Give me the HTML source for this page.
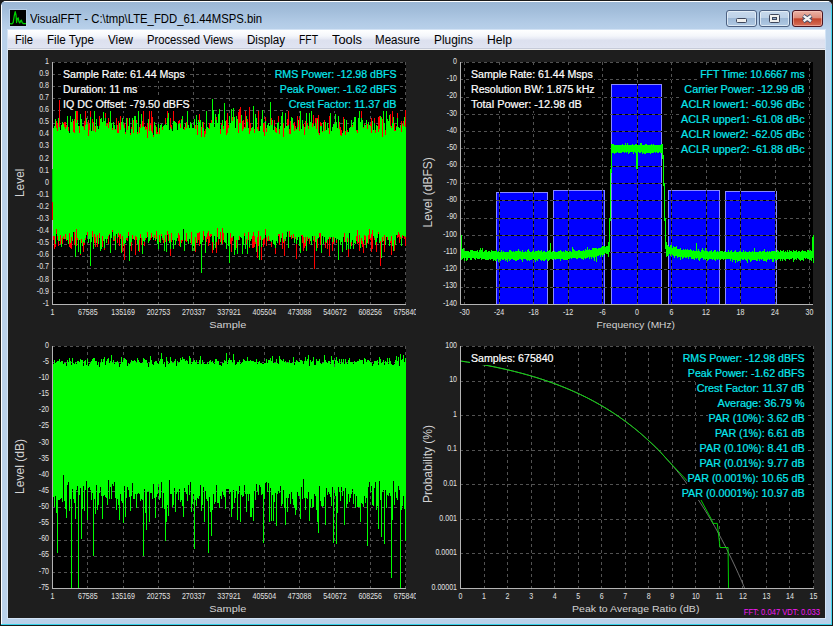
<!DOCTYPE html>
<html>
<head>
<meta charset="utf-8">
<title>VisualFFT</title>
<style>
html,body{margin:0;padding:0;}
body{width:833px;height:626px;overflow:hidden;background:#000;position:relative;font-family:"Liberation Sans",sans-serif;}
.abs{position:absolute;}
#frame{left:0;top:0;width:833px;height:626px;background:#1a1a1a;}
#win{left:1px;top:1px;width:831px;height:624px;background:#b9d1ea;border-radius:5px 5px 0 0;overflow:hidden;}
#cap{left:0;top:0;width:831px;height:29px;background:linear-gradient(#9ab6d4 0%,#a3bedb 35%,#b2cbe6 75%,#b9d1ea 100%);}
#hl-top{left:3px;top:0;width:825px;height:1px;background:#fff;}
#hl-left{left:0;top:4px;width:1px;height:620px;background:#fff;}
#hl-right{left:830px;top:4px;width:1px;height:620px;background:#43d9f0;}
#hl-bot{left:0;top:623px;width:831px;height:1px;background:#35d2ea;}
#client-edge{left:6px;top:28px;width:818px;height:590px;background:#d3e3f5;}
#menu{left:8px;top:30px;width:817px;height:20px;background:linear-gradient(#ffffff 0%,#f4f6fb 30%,#e6e9f4 45%,#dde1ef 50%,#dfe3f1 85%,#e3e7f3 90%,#c6cbd9 90%,#c6cbd9 95%,#f0f0f0 95%);}
#content{left:8px;top:50px;width:817px;height:568px;background:#1e1e1e;}
.mi{position:absolute;top:33px;font-size:12px;line-height:14px;color:#000;white-space:pre;transform-origin:0 0;}
#title{position:absolute;left:30px;top:12px;font-size:12px;line-height:14px;color:#000;white-space:pre;transform-origin:0 0;transform:scaleX(0.943);}
.btn{position:absolute;top:10px;width:29px;height:15px;border:1px solid #4c6182;border-radius:3px;background:linear-gradient(#c7d9ec 0%,#bed2e8 45%,#9db8d6 47%,#b0c9e3 100%);box-shadow:inset 0 0 0 1px rgba(240,246,252,.7);}
#bclose{border-color:#4a1420;background:linear-gradient(#eab3a6 0%,#dd8d7b 46%,#c2442a 52%,#d5705a 100%);box-shadow:inset 0 0 0 1px rgba(255,210,200,.5);}
</style>
</head>
<body>
<div id="frame" class="abs"></div>
<div id="win" class="abs">
  <div id="cap" class="abs"></div>
  <div id="hl-top" class="abs"></div>
  <div id="hl-left" class="abs"></div>
  <div id="hl-right" class="abs"></div>
  <div id="hl-bot" class="abs"></div>
</div>
<div id="client-edge" class="abs" style="left:7px;top:29px;width:819px;height:590px"></div>
<div id="menu" class="abs"></div>
<div id="content" class="abs"></div>
<!-- icon -->
<svg class="abs" style="left:9px;top:9px" width="18" height="18" viewBox="0 0 18 18">
  <rect x="0" y="0" width="18" height="18" fill="#c4d9ef" opacity=".6"/>
  <rect x="1" y="1" width="16" height="16" fill="#000"/>
  <path d="M1 14.6 L3 14.8 L4.2 13.5 L5.2 7 L6.2 2.6 L7 6 L7.6 13.5 L8.2 10 L9.2 8.8 L10 12.8 L10.8 14 L11.6 12 L12.4 11.2 L13.2 13.8 L14.5 14.6 L17 14.6" fill="none" stroke="#00d000" stroke-width="1.25" stroke-linejoin="round"/>
</svg>
<div id="title">VisualFFT - C:\tmp\LTE_FDD_61.44MSPS.bin</div>
<!-- caption buttons -->
<div class="btn" style="left:726px"><svg width="29" height="15" style="position:absolute;left:0;top:0"><rect x="9.5" y="7.5" width="10" height="4" rx="1" fill="#f0f0ee" stroke="#3e475c" stroke-width="1"/></svg></div>
<div class="btn" style="left:759px"><svg width="29" height="15" style="position:absolute;left:0;top:0"><rect x="9.5" y="3.5" width="10" height="8" rx="1" fill="#f0f0ee" stroke="#3e475c" stroke-width="1"/><rect x="12.5" y="6.5" width="4" height="2" fill="#8fa9c8" stroke="#3e475c" stroke-width="1"/></svg></div>
<div class="btn" id="bclose" style="left:792px"><svg width="29" height="15" style="position:absolute;left:0;top:0"><path d="M10.3 4.7 L18.3 10.5 M18.3 4.7 L10.3 10.5" stroke="#46506a" stroke-width="4.2" stroke-linecap="butt"/><path d="M10.6 4.9 L18 10.3 M18 4.9 L10.6 10.3" stroke="#f4f4f4" stroke-width="2.3" stroke-linecap="butt"/></svg></div>
<!-- menu items -->
<div class="mi" style="left:15px;transform:scaleX(0.931)">File</div>
<div class="mi" style="left:47px;transform:scaleX(0.970)">File Type</div>
<div class="mi" style="left:108px;transform:scaleX(0.969)">View</div>
<div class="mi" style="left:147px;transform:scaleX(0.937)">Processed Views</div>
<div class="mi" style="left:247px;transform:scaleX(0.965)">Display</div>
<div class="mi" style="left:299px;transform:scaleX(0.864)">FFT</div>
<div class="mi" style="left:332px;transform:scaleX(1.071)">Tools</div>
<div class="mi" style="left:375px;transform:scaleX(0.964)">Measure</div>
<div class="mi" style="left:434px;transform:scaleX(0.991)">Plugins</div>
<div class="mi" style="left:487px;transform:scaleX(1.013)">Help</div>

<svg width="833" height="626" viewBox="0 0 833 626" style="position:absolute;left:0;top:0" font-family='"Liberation Sans", sans-serif' shape-rendering="crispEdges">
<rect x="52" y="62" width="354" height="242" fill="#000"/>
<path d="M53 62.5H406" stroke="#000" stroke-width="1"/>
<path d="M53 62.5H406" stroke="#525252" stroke-width="1" stroke-dasharray="3 3" stroke-dashoffset="1"/>
<path d="M53 74.5H406" stroke="#000" stroke-width="1"/>
<path d="M53 74.5H406" stroke="#525252" stroke-width="1" stroke-dasharray="3 3" stroke-dashoffset="1"/>
<path d="M53 86.5H406" stroke="#000" stroke-width="1"/>
<path d="M53 86.5H406" stroke="#525252" stroke-width="1" stroke-dasharray="3 3" stroke-dashoffset="1"/>
<path d="M53 98.5H406" stroke="#000" stroke-width="1"/>
<path d="M53 98.5H406" stroke="#525252" stroke-width="1" stroke-dasharray="3 3" stroke-dashoffset="1"/>
<path d="M53 110.5H406" stroke="#000" stroke-width="1"/>
<path d="M53 110.5H406" stroke="#525252" stroke-width="1" stroke-dasharray="3 3" stroke-dashoffset="1"/>
<path d="M53 123.5H406" stroke="#000" stroke-width="1"/>
<path d="M53 123.5H406" stroke="#525252" stroke-width="1" stroke-dasharray="3 3" stroke-dashoffset="1"/>
<path d="M53 135.5H406" stroke="#000" stroke-width="1"/>
<path d="M53 135.5H406" stroke="#525252" stroke-width="1" stroke-dasharray="3 3" stroke-dashoffset="1"/>
<path d="M53 147.5H406" stroke="#000" stroke-width="1"/>
<path d="M53 147.5H406" stroke="#525252" stroke-width="1" stroke-dasharray="3 3" stroke-dashoffset="1"/>
<path d="M53 159.5H406" stroke="#000" stroke-width="1"/>
<path d="M53 159.5H406" stroke="#525252" stroke-width="1" stroke-dasharray="3 3" stroke-dashoffset="1"/>
<path d="M53 171.5H406" stroke="#000" stroke-width="1"/>
<path d="M53 171.5H406" stroke="#525252" stroke-width="1" stroke-dasharray="3 3" stroke-dashoffset="1"/>
<path d="M53 183.5H406" stroke="#000" stroke-width="1"/>
<path d="M53 183.5H406" stroke="#525252" stroke-width="1" stroke-dasharray="3 3" stroke-dashoffset="1"/>
<path d="M53 195.5H406" stroke="#000" stroke-width="1"/>
<path d="M53 195.5H406" stroke="#525252" stroke-width="1" stroke-dasharray="3 3" stroke-dashoffset="1"/>
<path d="M53 207.5H406" stroke="#000" stroke-width="1"/>
<path d="M53 207.5H406" stroke="#525252" stroke-width="1" stroke-dasharray="3 3" stroke-dashoffset="1"/>
<path d="M53 219.5H406" stroke="#000" stroke-width="1"/>
<path d="M53 219.5H406" stroke="#525252" stroke-width="1" stroke-dasharray="3 3" stroke-dashoffset="1"/>
<path d="M53 231.5H406" stroke="#000" stroke-width="1"/>
<path d="M53 231.5H406" stroke="#525252" stroke-width="1" stroke-dasharray="3 3" stroke-dashoffset="1"/>
<path d="M53 244.5H406" stroke="#000" stroke-width="1"/>
<path d="M53 244.5H406" stroke="#525252" stroke-width="1" stroke-dasharray="3 3" stroke-dashoffset="1"/>
<path d="M53 256.5H406" stroke="#000" stroke-width="1"/>
<path d="M53 256.5H406" stroke="#525252" stroke-width="1" stroke-dasharray="3 3" stroke-dashoffset="1"/>
<path d="M53 268.5H406" stroke="#000" stroke-width="1"/>
<path d="M53 268.5H406" stroke="#525252" stroke-width="1" stroke-dasharray="3 3" stroke-dashoffset="1"/>
<path d="M53 280.5H406" stroke="#000" stroke-width="1"/>
<path d="M53 280.5H406" stroke="#525252" stroke-width="1" stroke-dasharray="3 3" stroke-dashoffset="1"/>
<path d="M53 292.5H406" stroke="#000" stroke-width="1"/>
<path d="M53 292.5H406" stroke="#525252" stroke-width="1" stroke-dasharray="3 3" stroke-dashoffset="1"/>
<path d="M87.5 62V304" stroke="#000" stroke-width="1"/>
<path d="M87.5 62V304" stroke="#525252" stroke-width="1" stroke-dasharray="3 3" stroke-dashoffset="0"/>
<path d="M123.5 62V304" stroke="#000" stroke-width="1"/>
<path d="M123.5 62V304" stroke="#525252" stroke-width="1" stroke-dasharray="3 3" stroke-dashoffset="0"/>
<path d="M158.5 62V304" stroke="#000" stroke-width="1"/>
<path d="M158.5 62V304" stroke="#525252" stroke-width="1" stroke-dasharray="3 3" stroke-dashoffset="0"/>
<path d="M193.5 62V304" stroke="#000" stroke-width="1"/>
<path d="M193.5 62V304" stroke="#525252" stroke-width="1" stroke-dasharray="3 3" stroke-dashoffset="0"/>
<path d="M229.5 62V304" stroke="#000" stroke-width="1"/>
<path d="M229.5 62V304" stroke="#525252" stroke-width="1" stroke-dasharray="3 3" stroke-dashoffset="0"/>
<path d="M264.5 62V304" stroke="#000" stroke-width="1"/>
<path d="M264.5 62V304" stroke="#525252" stroke-width="1" stroke-dasharray="3 3" stroke-dashoffset="0"/>
<path d="M299.5 62V304" stroke="#000" stroke-width="1"/>
<path d="M299.5 62V304" stroke="#525252" stroke-width="1" stroke-dasharray="3 3" stroke-dashoffset="0"/>
<path d="M334.5 62V304" stroke="#000" stroke-width="1"/>
<path d="M334.5 62V304" stroke="#525252" stroke-width="1" stroke-dasharray="3 3" stroke-dashoffset="0"/>
<path d="M370.5 62V304" stroke="#000" stroke-width="1"/>
<path d="M370.5 62V304" stroke="#525252" stroke-width="1" stroke-dasharray="3 3" stroke-dashoffset="0"/>
<path d="M405.5 62V304" stroke="#000" stroke-width="1"/>
<path d="M405.5 62V304" stroke="#525252" stroke-width="1" stroke-dasharray="3 3" stroke-dashoffset="0"/>
<path d="M53.5 128V240M54.5 133V249M55.5 130V247M56.5 121V234M57.5 123V240M58.5 132V246M59.5 100V237M60.5 131V244M61.5 131V239M62.5 126V244M63.5 123V239M64.5 122V238M65.5 122V239M66.5 125V241M67.5 126V235M68.5 127V234M69.5 137V247M70.5 131V248M71.5 128V249M72.5 137V230M73.5 121V232M74.5 119V245M75.5 128V231M76.5 111V246M77.5 110V240M78.5 127V240M79.5 126V233M80.5 133V255M81.5 128V243M82.5 127V238M83.5 126V252M84.5 121V245M85.5 104V240M86.5 120V234M87.5 129V236M88.5 120V235M89.5 124V236M90.5 98V237M91.5 131V234M92.5 119V237M93.5 122V236M94.5 132V243M95.5 126V247M96.5 132V236M97.5 128V247M98.5 130V233M99.5 116V238M100.5 127V243M101.5 126V232M102.5 132V247M103.5 124V239M104.5 128V250M105.5 113V231M106.5 124V239M107.5 123V235M108.5 118V244M109.5 131V235M110.5 124V237M111.5 136V238M112.5 128V232M113.5 128V241M114.5 128V241M115.5 129V237M116.5 118V234M117.5 125V243M118.5 121V237M119.5 125V246M120.5 116V239M121.5 135V236M122.5 121V252M123.5 129V236M124.5 123V260M125.5 132V231M126.5 129V240M127.5 118V241M128.5 132V236M129.5 134V239M130.5 133V236M131.5 127V251M132.5 118V239M133.5 120V239M134.5 134V232M135.5 127V255M136.5 120V240M137.5 132V238M138.5 128V239M139.5 127V252M140.5 124V238M141.5 125V245M142.5 121V246M143.5 111V234M144.5 132V246M145.5 126V240M146.5 127V236M147.5 123V237M148.5 130V239M149.5 108V235M150.5 124V240M151.5 109V238M152.5 117V235M153.5 135V237M154.5 129V238M155.5 125V241M156.5 127V239M157.5 132V241M158.5 124V236M159.5 128V242M160.5 129V240M161.5 124V236M162.5 127V240M163.5 130V243M164.5 133V235M165.5 118V242M166.5 134V234M167.5 100V235M168.5 130V241M169.5 131V236M170.5 118V256M171.5 125V242M172.5 131V234M173.5 105V238M174.5 128V239M175.5 131V237M176.5 127V237M177.5 130V238M178.5 121V241M179.5 120V246M180.5 124V243M181.5 119V243M182.5 124V241M183.5 134V228M184.5 127V242M185.5 124V241M186.5 122V242M187.5 134V238M188.5 125V232M189.5 136V233M190.5 127V242M191.5 127V244M192.5 133V234M193.5 130V240M194.5 128V237M195.5 125V252M196.5 132V234M197.5 125V243M198.5 133V240M199.5 114V246M200.5 125V241M201.5 127V235M202.5 134V235M203.5 122V240M204.5 131V236M205.5 129V240M206.5 130V242M207.5 128V239M208.5 135V246M209.5 123V243M210.5 125V237M211.5 120V236M212.5 112V253M213.5 121V236M214.5 133V235M215.5 132V241M216.5 117V253M217.5 128V237M218.5 126V245M219.5 128V238M220.5 129V242M221.5 123V238M222.5 135V244M223.5 126V240M224.5 128V239M225.5 128V238M226.5 120V246M227.5 113V231M228.5 125V244M229.5 130V243M230.5 131V244M231.5 130V252M232.5 117V241M233.5 133V236M234.5 131V237M235.5 132V246M236.5 127V248M237.5 133V243M238.5 112V236M239.5 109V240M240.5 107V233M241.5 122V237M242.5 121V238M243.5 120V236M244.5 127V236M245.5 111V242M246.5 128V244M247.5 119V241M248.5 129V240M249.5 107V248M250.5 123V241M251.5 134V238M252.5 127V248M253.5 131V248M254.5 129V247M255.5 128V244M256.5 120V231M257.5 127V258M258.5 111V246M259.5 131V247M260.5 135V240M261.5 132V260M262.5 112V240M263.5 123V247M264.5 123V244M265.5 117V235M266.5 128V246M267.5 131V238M268.5 123V241M269.5 132V241M270.5 131V235M271.5 118V247M272.5 130V233M273.5 132V233M274.5 120V237M275.5 127V254M276.5 128V237M277.5 128V238M278.5 116V236M279.5 129V245M280.5 128V232M281.5 131V233M282.5 131V249M283.5 123V243M284.5 130V256M285.5 132V235M286.5 133V233M287.5 119V229M288.5 109V238M289.5 129V237M290.5 121V237M291.5 127V239M292.5 134V232M293.5 124V238M294.5 122V243M295.5 126V239M296.5 129V259M297.5 116V236M298.5 124V237M299.5 118V241M300.5 129V234M301.5 131V236M302.5 124V243M303.5 124V251M304.5 127V248M305.5 121V246M306.5 121V243M307.5 123V241M308.5 126V232M309.5 115V244M310.5 130V233M311.5 128V237M312.5 123V234M313.5 115V241M314.5 130V269M315.5 118V235M316.5 118V245M317.5 118V248M318.5 115V235M319.5 133V237M320.5 122V245M321.5 123V244M322.5 131V232M323.5 128V244M324.5 120V237M325.5 125V248M326.5 132V235M327.5 124V249M328.5 129V239M329.5 116V256M330.5 130V239M331.5 131V234M332.5 131V251M333.5 129V244M334.5 124V236M335.5 114V238M336.5 127V243M337.5 130V238M338.5 120V240M339.5 122V234M340.5 127V243M341.5 130V236M342.5 133V238M343.5 117V236M344.5 120V242M345.5 131V236M346.5 128V237M347.5 130V242M348.5 138V257M349.5 134V231M350.5 132V236M351.5 131V246M352.5 125V236M353.5 128V244M354.5 120V240M355.5 130V234M356.5 130V241M357.5 130V244M358.5 125V243M359.5 124V251M360.5 125V245M361.5 110V244M362.5 132V247M363.5 127V253M364.5 124V240M365.5 127V245M366.5 130V236M367.5 124V233M368.5 131V244M369.5 133V239M370.5 124V240M371.5 118V252M372.5 130V249M373.5 137V233M374.5 118V240M375.5 130V235M376.5 131V252M377.5 133V238M378.5 117V234M379.5 116V234M380.5 136V266M381.5 117V239M382.5 119V242M383.5 127V236M384.5 125V252M385.5 130V244M386.5 120V235M387.5 133V240M388.5 121V240M389.5 130V231M390.5 114V243M391.5 126V255M392.5 110V241M393.5 123V247M394.5 123V251M395.5 130V239M396.5 126V232M397.5 113V238M398.5 137V237M399.5 133V243M400.5 133V239M401.5 121V236M402.5 125V238M403.5 121V235M404.5 117V239M405.5 110V246" stroke="#ff0000" stroke-width="1" fill="none"/>
<path d="M53.5 128V236M54.5 126V236M55.5 119V244M56.5 128V229M57.5 131V236M58.5 118V241M59.5 127V241M60.5 130V235M61.5 125V247M62.5 122V238M63.5 124V236M64.5 127V239M65.5 129V234M66.5 127V240M67.5 116V240M68.5 131V244M69.5 133V233M70.5 116V243M71.5 122V237M72.5 119V241M73.5 132V232M74.5 133V232M75.5 111V257M76.5 123V229M77.5 120V238M78.5 126V252M79.5 133V240M80.5 114V254M81.5 119V239M82.5 126V246M83.5 127V242M84.5 130V243M85.5 125V238M86.5 118V235M87.5 124V232M88.5 136V243M89.5 130V239M90.5 117V266M91.5 131V242M92.5 123V231M93.5 131V249M94.5 105V234M95.5 132V237M96.5 119V243M97.5 126V235M98.5 129V244M99.5 126V233M100.5 119V251M101.5 118V249M102.5 122V236M103.5 112V241M104.5 121V248M105.5 118V239M106.5 126V243M107.5 124V239M108.5 128V236M109.5 122V234M110.5 110V253M111.5 123V238M112.5 130V230M113.5 122V240M114.5 125V236M115.5 130V250M116.5 125V234M117.5 133V238M118.5 133V233M119.5 123V235M120.5 130V234M121.5 122V253M122.5 118V236M123.5 125V246M124.5 128V244M125.5 134V243M126.5 118V238M127.5 130V238M128.5 126V232M129.5 118V261M130.5 135V246M131.5 129V242M132.5 118V235M133.5 133V239M134.5 116V240M135.5 116V236M136.5 123V237M137.5 134V244M138.5 110V251M139.5 133V240M140.5 128V234M141.5 114V238M142.5 127V254M143.5 126V241M144.5 127V242M145.5 130V238M146.5 129V238M147.5 138V232M148.5 119V243M149.5 131V241M150.5 125V238M151.5 131V233M152.5 133V237M153.5 137V240M154.5 122V235M155.5 126V240M156.5 134V231M157.5 134V244M158.5 124V249M159.5 134V235M160.5 125V243M161.5 124V234M162.5 130V238M163.5 126V240M164.5 125V251M165.5 124V235M166.5 125V252M167.5 118V231M168.5 113V234M169.5 130V243M170.5 127V249M171.5 129V233M172.5 131V240M173.5 121V249M174.5 121V240M175.5 122V245M176.5 123V241M177.5 130V238M178.5 124V233M179.5 123V235M180.5 128V247M181.5 120V240M182.5 116V240M183.5 129V229M184.5 130V251M185.5 123V240M186.5 128V233M187.5 110V241M188.5 125V244M189.5 128V239M190.5 122V243M191.5 124V232M192.5 128V251M193.5 128V246M194.5 119V251M195.5 129V237M196.5 115V243M197.5 135V233M198.5 120V233M199.5 122V232M200.5 120V244M201.5 137V273M202.5 122V242M203.5 128V231M204.5 137V236M205.5 134V253M206.5 111V237M207.5 127V233M208.5 128V231M209.5 129V236M210.5 123V234M211.5 123V234M212.5 99V242M213.5 110V250M214.5 127V236M215.5 114V248M216.5 120V242M217.5 123V228M218.5 114V239M219.5 109V239M220.5 134V232M221.5 125V244M222.5 120V228M223.5 129V233M224.5 103V242M225.5 121V243M226.5 135V249M227.5 133V233M228.5 128V246M229.5 116V263M230.5 123V233M231.5 109V238M232.5 121V237M233.5 108V236M234.5 117V255M235.5 128V250M236.5 116V240M237.5 119V254M238.5 133V240M239.5 123V236M240.5 123V237M241.5 115V238M242.5 131V254M243.5 129V245M244.5 127V233M245.5 128V249M246.5 116V239M247.5 122V254M248.5 128V232M249.5 134V247M250.5 131V241M251.5 128V239M252.5 127V236M253.5 106V232M254.5 133V236M255.5 114V242M256.5 118V252M257.5 129V237M258.5 131V231M259.5 131V260M260.5 126V236M261.5 119V247M262.5 110V240M263.5 132V239M264.5 136V238M265.5 121V229M266.5 132V237M267.5 125V241M268.5 123V236M269.5 126V240M270.5 102V241M271.5 125V242M272.5 120V240M273.5 130V244M274.5 126V245M275.5 132V248M276.5 133V241M277.5 123V243M278.5 122V234M279.5 134V234M280.5 126V242M281.5 116V238M282.5 112V233M283.5 137V242M284.5 128V239M285.5 113V241M286.5 126V237M287.5 126V231M288.5 125V248M289.5 134V231M290.5 134V237M291.5 117V235M292.5 118V238M293.5 125V234M294.5 131V243M295.5 128V237M296.5 130V244M297.5 127V240M298.5 120V237M299.5 131V246M300.5 105V253M301.5 129V235M302.5 120V235M303.5 126V237M304.5 135V243M305.5 127V237M306.5 113V251M307.5 125V237M308.5 129V239M309.5 113V238M310.5 122V241M311.5 107V245M312.5 127V236M313.5 124V240M314.5 126V236M315.5 123V242M316.5 129V251M317.5 119V239M318.5 133V238M319.5 135V233M320.5 126V233M321.5 126V253M322.5 132V236M323.5 122V244M324.5 131V237M325.5 122V242M326.5 130V243M327.5 123V240M328.5 128V239M329.5 134V237M330.5 113V238M331.5 131V237M332.5 127V242M333.5 124V237M334.5 124V242M335.5 114V238M336.5 122V240M337.5 128V239M338.5 116V260M339.5 129V240M340.5 135V245M341.5 136V242M342.5 133V252M343.5 131V237M344.5 119V233M345.5 135V242M346.5 120V250M347.5 132V238M348.5 132V249M349.5 128V233M350.5 127V249M351.5 120V242M352.5 127V240M353.5 122V249M354.5 117V243M355.5 117V244M356.5 131V236M357.5 133V230M358.5 118V242M359.5 105V235M360.5 122V248M361.5 118V238M362.5 120V241M363.5 128V244M364.5 125V235M365.5 125V236M366.5 120V248M367.5 129V243M368.5 122V235M369.5 125V229M370.5 126V238M371.5 133V234M372.5 121V230M373.5 130V236M374.5 123V238M375.5 133V245M376.5 125V242M377.5 126V238M378.5 132V232M379.5 129V243M380.5 116V241M381.5 118V258M382.5 137V237M383.5 109V241M384.5 123V235M385.5 135V245M386.5 106V237M387.5 119V237M388.5 121V240M389.5 115V246M390.5 126V241M391.5 128V236M392.5 123V246M393.5 117V251M394.5 131V240M395.5 131V245M396.5 127V235M397.5 118V235M398.5 127V232M399.5 128V234M400.5 125V237M401.5 132V246M402.5 124V235M403.5 126V236M404.5 117V236M405.5 127V237" stroke="#00ff00" stroke-width="1" fill="none"/>
<rect x="62" y="66" width="123.8" height="15" fill="#000"/>
<text x="63.0" y="78" font-size="10.58" textLength="121.8" lengthAdjust="spacingAndGlyphs" fill="#ffffff" stroke="#ffffff" stroke-width="0.2">Sample Rate: 61.44 Msps</text>
<rect x="62" y="81" width="76.4" height="15" fill="#000"/>
<text x="63.0" y="93" font-size="10.58" textLength="74.4" lengthAdjust="spacingAndGlyphs" fill="#ffffff" stroke="#ffffff" stroke-width="0.2">Duration: 11 ms</text>
<rect x="62" y="96" width="128.6" height="15" fill="#000"/>
<text x="63.0" y="108" font-size="10.58" textLength="126.6" lengthAdjust="spacingAndGlyphs" fill="#ffffff" stroke="#ffffff" stroke-width="0.2">IQ DC Offset: -79.50 dBFS</text>
<rect x="273.7" y="66" width="123.9" height="15" fill="#000"/>
<text x="274.7" y="78" font-size="10.58" textLength="121.9" lengthAdjust="spacingAndGlyphs" fill="#08e8ee" stroke="#08e8ee" stroke-width="0.2">RMS Power: -12.98 dBFS</text>
<rect x="278.8" y="81" width="118.8" height="15" fill="#000"/>
<text x="279.8" y="93" font-size="10.58" textLength="116.8" lengthAdjust="spacingAndGlyphs" fill="#08e8ee" stroke="#08e8ee" stroke-width="0.2">Peak Power: -1.62 dBFS</text>
<rect x="287.7" y="96" width="109.9" height="15" fill="#000"/>
<text x="288.7" y="108" font-size="10.58" textLength="107.9" lengthAdjust="spacingAndGlyphs" fill="#08e8ee" stroke="#08e8ee" stroke-width="0.2">Crest Factor: 11.37 dB</text>
<rect x="52" y="62" width="1" height="243" fill="#b4b4b4"/>
<rect x="52" y="304" width="354" height="1" fill="#b4b4b4"/>
<rect x="52" y="169" width="1" height="33" fill="#10c010"/>
<rect x="52" y="202" width="1" height="18" fill="#f00000"/>
<text transform="translate(49 63.7) scale(0.82 1)" text-anchor="end" font-size="8.6" fill="#e2e2e2">1</text>
<text transform="translate(49 75.8) scale(0.82 1)" text-anchor="end" font-size="8.6" fill="#e2e2e2">0.9</text>
<text transform="translate(49 87.9) scale(0.82 1)" text-anchor="end" font-size="8.6" fill="#e2e2e2">0.8</text>
<text transform="translate(49 100) scale(0.82 1)" text-anchor="end" font-size="8.6" fill="#e2e2e2">0.7</text>
<text transform="translate(49 112.1) scale(0.82 1)" text-anchor="end" font-size="8.6" fill="#e2e2e2">0.6</text>
<text transform="translate(49 124.2) scale(0.82 1)" text-anchor="end" font-size="8.6" fill="#e2e2e2">0.5</text>
<text transform="translate(49 136.3) scale(0.82 1)" text-anchor="end" font-size="8.6" fill="#e2e2e2">0.4</text>
<text transform="translate(49 148.4) scale(0.82 1)" text-anchor="end" font-size="8.6" fill="#e2e2e2">0.3</text>
<text transform="translate(49 160.5) scale(0.82 1)" text-anchor="end" font-size="8.6" fill="#e2e2e2">0.2</text>
<text transform="translate(49 172.6) scale(0.82 1)" text-anchor="end" font-size="8.6" fill="#e2e2e2">0.1</text>
<text transform="translate(49 184.7) scale(0.82 1)" text-anchor="end" font-size="8.6" fill="#e2e2e2">0</text>
<text transform="translate(49 196.8) scale(0.82 1)" text-anchor="end" font-size="8.6" fill="#e2e2e2">-0.1</text>
<text transform="translate(49 208.9) scale(0.82 1)" text-anchor="end" font-size="8.6" fill="#e2e2e2">-0.2</text>
<text transform="translate(49 221) scale(0.82 1)" text-anchor="end" font-size="8.6" fill="#e2e2e2">-0.3</text>
<text transform="translate(49 233.1) scale(0.82 1)" text-anchor="end" font-size="8.6" fill="#e2e2e2">-0.4</text>
<text transform="translate(49 245.2) scale(0.82 1)" text-anchor="end" font-size="8.6" fill="#e2e2e2">-0.5</text>
<text transform="translate(49 257.3) scale(0.82 1)" text-anchor="end" font-size="8.6" fill="#e2e2e2">-0.6</text>
<text transform="translate(49 269.4) scale(0.82 1)" text-anchor="end" font-size="8.6" fill="#e2e2e2">-0.7</text>
<text transform="translate(49 281.5) scale(0.82 1)" text-anchor="end" font-size="8.6" fill="#e2e2e2">-0.8</text>
<text transform="translate(49 293.6) scale(0.82 1)" text-anchor="end" font-size="8.6" fill="#e2e2e2">-0.9</text>
<text transform="translate(49 305.7) scale(0.82 1)" text-anchor="end" font-size="8.6" fill="#e2e2e2">-1</text>
<clipPath id="c1"><rect x="8" y="50" width="408" height="284"/></clipPath><g clip-path="url(#c1)">
<text transform="translate(52.5 314.8) scale(0.82 1)" text-anchor="middle" font-size="8.6" fill="#e2e2e2">1</text>
<text transform="translate(87.8 314.8) scale(0.82 1)" text-anchor="middle" font-size="8.6" fill="#e2e2e2">67585</text>
<text transform="translate(123.1 314.8) scale(0.82 1)" text-anchor="middle" font-size="8.6" fill="#e2e2e2">135169</text>
<text transform="translate(158.4 314.8) scale(0.82 1)" text-anchor="middle" font-size="8.6" fill="#e2e2e2">202753</text>
<text transform="translate(193.7 314.8) scale(0.82 1)" text-anchor="middle" font-size="8.6" fill="#e2e2e2">270337</text>
<text transform="translate(229 314.8) scale(0.82 1)" text-anchor="middle" font-size="8.6" fill="#e2e2e2">337921</text>
<text transform="translate(264.3 314.8) scale(0.82 1)" text-anchor="middle" font-size="8.6" fill="#e2e2e2">405504</text>
<text transform="translate(299.6 314.8) scale(0.82 1)" text-anchor="middle" font-size="8.6" fill="#e2e2e2">473088</text>
<text transform="translate(334.9 314.8) scale(0.82 1)" text-anchor="middle" font-size="8.6" fill="#e2e2e2">540672</text>
<text transform="translate(370.2 314.8) scale(0.82 1)" text-anchor="middle" font-size="8.6" fill="#e2e2e2">608256</text>
<text transform="translate(405.5 314.8) scale(0.82 1)" text-anchor="middle" font-size="8.6" fill="#e2e2e2">675840</text>
</g>
<text x="209.15" y="327.8" textLength="37.1" lengthAdjust="spacingAndGlyphs" font-size="9.7" fill="#d2d2d2">Sample</text>
<text transform="translate(23.5 197) rotate(-90) scale(1 1.13)" textLength="28.4" lengthAdjust="spacingAndGlyphs" font-size="12" fill="#d2d2d2">Level</text>
<rect x="52" y="346" width="354" height="242" fill="#000"/>
<path d="M53 346.5H406" stroke="#000" stroke-width="1"/>
<path d="M53 346.5H406" stroke="#525252" stroke-width="1" stroke-dasharray="3 3" stroke-dashoffset="1"/>
<path d="M53 362.5H406" stroke="#000" stroke-width="1"/>
<path d="M53 362.5H406" stroke="#525252" stroke-width="1" stroke-dasharray="3 3" stroke-dashoffset="1"/>
<path d="M53 378.5H406" stroke="#000" stroke-width="1"/>
<path d="M53 378.5H406" stroke="#525252" stroke-width="1" stroke-dasharray="3 3" stroke-dashoffset="1"/>
<path d="M53 394.5H406" stroke="#000" stroke-width="1"/>
<path d="M53 394.5H406" stroke="#525252" stroke-width="1" stroke-dasharray="3 3" stroke-dashoffset="1"/>
<path d="M53 411.5H406" stroke="#000" stroke-width="1"/>
<path d="M53 411.5H406" stroke="#525252" stroke-width="1" stroke-dasharray="3 3" stroke-dashoffset="1"/>
<path d="M53 427.5H406" stroke="#000" stroke-width="1"/>
<path d="M53 427.5H406" stroke="#525252" stroke-width="1" stroke-dasharray="3 3" stroke-dashoffset="1"/>
<path d="M53 443.5H406" stroke="#000" stroke-width="1"/>
<path d="M53 443.5H406" stroke="#525252" stroke-width="1" stroke-dasharray="3 3" stroke-dashoffset="1"/>
<path d="M53 459.5H406" stroke="#000" stroke-width="1"/>
<path d="M53 459.5H406" stroke="#525252" stroke-width="1" stroke-dasharray="3 3" stroke-dashoffset="1"/>
<path d="M53 475.5H406" stroke="#000" stroke-width="1"/>
<path d="M53 475.5H406" stroke="#525252" stroke-width="1" stroke-dasharray="3 3" stroke-dashoffset="1"/>
<path d="M53 491.5H406" stroke="#000" stroke-width="1"/>
<path d="M53 491.5H406" stroke="#525252" stroke-width="1" stroke-dasharray="3 3" stroke-dashoffset="1"/>
<path d="M53 507.5H406" stroke="#000" stroke-width="1"/>
<path d="M53 507.5H406" stroke="#525252" stroke-width="1" stroke-dasharray="3 3" stroke-dashoffset="1"/>
<path d="M53 523.5H406" stroke="#000" stroke-width="1"/>
<path d="M53 523.5H406" stroke="#525252" stroke-width="1" stroke-dasharray="3 3" stroke-dashoffset="1"/>
<path d="M53 540.5H406" stroke="#000" stroke-width="1"/>
<path d="M53 540.5H406" stroke="#525252" stroke-width="1" stroke-dasharray="3 3" stroke-dashoffset="1"/>
<path d="M53 556.5H406" stroke="#000" stroke-width="1"/>
<path d="M53 556.5H406" stroke="#525252" stroke-width="1" stroke-dasharray="3 3" stroke-dashoffset="1"/>
<path d="M53 572.5H406" stroke="#000" stroke-width="1"/>
<path d="M53 572.5H406" stroke="#525252" stroke-width="1" stroke-dasharray="3 3" stroke-dashoffset="1"/>
<path d="M87.5 346V588" stroke="#000" stroke-width="1"/>
<path d="M87.5 346V588" stroke="#525252" stroke-width="1" stroke-dasharray="3 3" stroke-dashoffset="0"/>
<path d="M123.5 346V588" stroke="#000" stroke-width="1"/>
<path d="M123.5 346V588" stroke="#525252" stroke-width="1" stroke-dasharray="3 3" stroke-dashoffset="0"/>
<path d="M158.5 346V588" stroke="#000" stroke-width="1"/>
<path d="M158.5 346V588" stroke="#525252" stroke-width="1" stroke-dasharray="3 3" stroke-dashoffset="0"/>
<path d="M193.5 346V588" stroke="#000" stroke-width="1"/>
<path d="M193.5 346V588" stroke="#525252" stroke-width="1" stroke-dasharray="3 3" stroke-dashoffset="0"/>
<path d="M229.5 346V588" stroke="#000" stroke-width="1"/>
<path d="M229.5 346V588" stroke="#525252" stroke-width="1" stroke-dasharray="3 3" stroke-dashoffset="0"/>
<path d="M264.5 346V588" stroke="#000" stroke-width="1"/>
<path d="M264.5 346V588" stroke="#525252" stroke-width="1" stroke-dasharray="3 3" stroke-dashoffset="0"/>
<path d="M299.5 346V588" stroke="#000" stroke-width="1"/>
<path d="M299.5 346V588" stroke="#525252" stroke-width="1" stroke-dasharray="3 3" stroke-dashoffset="0"/>
<path d="M334.5 346V588" stroke="#000" stroke-width="1"/>
<path d="M334.5 346V588" stroke="#525252" stroke-width="1" stroke-dasharray="3 3" stroke-dashoffset="0"/>
<path d="M370.5 346V588" stroke="#000" stroke-width="1"/>
<path d="M370.5 346V588" stroke="#525252" stroke-width="1" stroke-dasharray="3 3" stroke-dashoffset="0"/>
<path d="M405.5 346V588" stroke="#000" stroke-width="1"/>
<path d="M405.5 346V588" stroke="#525252" stroke-width="1" stroke-dasharray="3 3" stroke-dashoffset="0"/>
<path d="M53.5 364V497M54.5 360V507M55.5 363V496M56.5 362V513M57.5 361V553M58.5 361V500M59.5 359V500M60.5 362V499M61.5 361V498M62.5 361V502M63.5 364V475M64.5 363V501M65.5 363V509M66.5 366V518M67.5 360V485M68.5 362V482M69.5 358V511M70.5 361V499M71.5 365V588M72.5 358V489M73.5 363V499M74.5 364V503M75.5 362V519M76.5 364V490M77.5 361V486M78.5 361V588M79.5 362V495M80.5 359V488M81.5 360V539M82.5 360V509M83.5 366V486M84.5 361V511M85.5 360V490M86.5 365V481M87.5 359V520M88.5 366V488M89.5 364V487M90.5 363V490M91.5 361V500M92.5 359V493M93.5 358V556M94.5 358V499M95.5 361V514M96.5 361V485M97.5 365V510M98.5 362V505M99.5 367V493M100.5 363V487M101.5 359V496M102.5 362V519M103.5 359V496M104.5 357V495M105.5 365V497M106.5 361V498M107.5 359V505M108.5 358V480M109.5 363V499M110.5 361V487M111.5 355V499M112.5 363V484M113.5 360V486M114.5 364V482M115.5 362V498M116.5 362V510M117.5 361V499M118.5 363V505M119.5 367V520M120.5 364V494M121.5 357V501M122.5 362V503M123.5 360V523M124.5 358V486M125.5 359V517M126.5 360V498M127.5 366V487M128.5 363V490M129.5 364V497M130.5 363V511M131.5 360V496M132.5 361V483M133.5 361V499M134.5 360V499M135.5 361V494M136.5 363V508M137.5 358V494M138.5 360V493M139.5 362V494M140.5 363V501M141.5 363V499M142.5 363V500M143.5 358V556M144.5 359V489M145.5 360V513M146.5 360V530M147.5 363V492M148.5 367V491M149.5 363V522M150.5 356V493M151.5 360V493M152.5 364V499M153.5 365V484M154.5 362V498M155.5 361V518M156.5 361V497M157.5 363V494M158.5 364V484M159.5 361V500M160.5 359V498M161.5 353V482M162.5 359V508M163.5 364V493M164.5 362V509M165.5 367V541M166.5 357V522M167.5 361V505M168.5 364V516M169.5 363V480M170.5 357V494M171.5 361V494M172.5 363V507M173.5 363V505M174.5 361V488M175.5 359V512M176.5 366V494M177.5 361V492M178.5 363V500M179.5 362V489M180.5 358V502M181.5 360V500M182.5 357V506M183.5 359V517M184.5 359V488M185.5 361V492M186.5 360V494M187.5 361V501M188.5 364V485M189.5 356V495M190.5 358V482M191.5 364V512M192.5 362V504M193.5 361V494M194.5 360V549M195.5 362V500M196.5 360V506M197.5 364V498M198.5 364V499M199.5 360V496M200.5 356V485M201.5 364V511M202.5 360V505M203.5 363V487M204.5 364V522M205.5 364V491M206.5 364V499M207.5 362V501M208.5 364V553M209.5 361V497M210.5 360V512M211.5 362V536M212.5 361V510M213.5 363V494M214.5 364V504M215.5 359V502M216.5 359V485M217.5 361V503M218.5 361V503M219.5 365V508M220.5 365V496M221.5 366V499M222.5 363V491M223.5 363V495M224.5 360V497M225.5 361V509M226.5 353V489M227.5 364V489M228.5 360V489M229.5 358V494M230.5 360V492M231.5 360V517M232.5 363V509M233.5 354V490M234.5 360V503M235.5 365V498M236.5 364V491M237.5 362V520M238.5 362V494M239.5 360V486M240.5 364V522M241.5 363V495M242.5 362V497M243.5 359V496M244.5 360V485M245.5 361V494M246.5 361V512M247.5 357V494M248.5 361V501M249.5 361V494M250.5 360V517M251.5 361V517M252.5 361V508M253.5 361V521M254.5 362V491M255.5 362V500M256.5 359V484M257.5 364V491M258.5 362V495M259.5 361V485M260.5 363V487M261.5 363V495M262.5 364V494M263.5 364V543M264.5 363V499M265.5 363V483M266.5 359V482M267.5 363V492M268.5 360V483M269.5 360V522M270.5 358V488M271.5 361V521M272.5 356V495M273.5 363V521M274.5 363V502M275.5 363V493M276.5 359V526M277.5 363V494M278.5 364V491M279.5 356V493M280.5 359V486M281.5 360V506M282.5 361V504M283.5 359V490M284.5 362V508M285.5 361V525M286.5 363V498M287.5 362V512M288.5 363V498M289.5 360V494M290.5 363V504M291.5 363V492M292.5 363V499M293.5 357V505M294.5 365V508M295.5 362V515M296.5 360V510M297.5 361V492M298.5 362V496M299.5 362V496M300.5 360V519M301.5 360V487M302.5 361V499M303.5 364V479M304.5 361V498M305.5 357V510M306.5 361V498M307.5 359V499M308.5 355V492M309.5 366V521M310.5 360V507M311.5 362V499M312.5 361V508M313.5 357V507M314.5 365V494M315.5 365V496M316.5 359V510M317.5 361V522M318.5 361V533M319.5 359V486M320.5 363V501M321.5 364V506M322.5 363V507M323.5 363V506M324.5 355V497M325.5 360V525M326.5 362V488M327.5 363V495M328.5 361V492M329.5 361V494M330.5 364V497M331.5 356V506M332.5 360V487M333.5 360V543M334.5 367V490M335.5 360V496M336.5 357V544M337.5 361V513M338.5 363V487M339.5 359V492M340.5 364V501M341.5 359V487M342.5 363V496M343.5 359V491M344.5 364V525M345.5 359V488M346.5 363V508M347.5 364V504M348.5 360V494M349.5 358V502M350.5 362V498M351.5 362V494M352.5 362V489M353.5 364V504M354.5 361V494M355.5 362V508M356.5 362V496M357.5 361V507M358.5 361V507M359.5 359V507M360.5 360V522M361.5 360V503M362.5 360V504M363.5 364V507M364.5 358V496M365.5 359V503M366.5 362V498M367.5 360V546M368.5 360V487M369.5 361V482M370.5 362V492M371.5 363V486M372.5 366V505M373.5 364V506M374.5 361V488M375.5 361V482M376.5 361V510M377.5 360V506M378.5 365V529M379.5 357V481M380.5 359V500M381.5 363V537M382.5 362V492M383.5 360V490M384.5 365V544M385.5 361V490M386.5 362V508M387.5 358V495M388.5 364V496M389.5 358V493M390.5 361V496M391.5 364V578M392.5 365V520M393.5 365V481M394.5 364V505M395.5 360V492M396.5 356V498M397.5 361V500M398.5 357V486M399.5 366V490M400.5 354V588M401.5 360V510M402.5 359V506M403.5 355V496M404.5 362V509M405.5 358V541" stroke="#00ff00" stroke-width="1" fill="none"/>
<rect x="52" y="346" width="1" height="243" fill="#b4b4b4"/>
<rect x="52" y="588" width="354" height="1" fill="#b4b4b4"/>
<text transform="translate(49 347.7) scale(0.82 1)" text-anchor="end" font-size="8.6" fill="#e2e2e2">0</text>
<text transform="translate(49 363.83) scale(0.82 1)" text-anchor="end" font-size="8.6" fill="#e2e2e2">-5</text>
<text transform="translate(49 379.97) scale(0.82 1)" text-anchor="end" font-size="8.6" fill="#e2e2e2">-10</text>
<text transform="translate(49 396.1) scale(0.82 1)" text-anchor="end" font-size="8.6" fill="#e2e2e2">-15</text>
<text transform="translate(49 412.23) scale(0.82 1)" text-anchor="end" font-size="8.6" fill="#e2e2e2">-20</text>
<text transform="translate(49 428.37) scale(0.82 1)" text-anchor="end" font-size="8.6" fill="#e2e2e2">-25</text>
<text transform="translate(49 444.5) scale(0.82 1)" text-anchor="end" font-size="8.6" fill="#e2e2e2">-30</text>
<text transform="translate(49 460.63) scale(0.82 1)" text-anchor="end" font-size="8.6" fill="#e2e2e2">-35</text>
<text transform="translate(49 476.77) scale(0.82 1)" text-anchor="end" font-size="8.6" fill="#e2e2e2">-40</text>
<text transform="translate(49 492.9) scale(0.82 1)" text-anchor="end" font-size="8.6" fill="#e2e2e2">-45</text>
<text transform="translate(49 509.03) scale(0.82 1)" text-anchor="end" font-size="8.6" fill="#e2e2e2">-50</text>
<text transform="translate(49 525.17) scale(0.82 1)" text-anchor="end" font-size="8.6" fill="#e2e2e2">-55</text>
<text transform="translate(49 541.3) scale(0.82 1)" text-anchor="end" font-size="8.6" fill="#e2e2e2">-60</text>
<text transform="translate(49 557.43) scale(0.82 1)" text-anchor="end" font-size="8.6" fill="#e2e2e2">-65</text>
<text transform="translate(49 573.57) scale(0.82 1)" text-anchor="end" font-size="8.6" fill="#e2e2e2">-70</text>
<text transform="translate(49 589.7) scale(0.82 1)" text-anchor="end" font-size="8.6" fill="#e2e2e2">-75</text>
<clipPath id="c3"><rect x="8" y="334" width="408" height="284"/></clipPath><g clip-path="url(#c3)">
<text transform="translate(52.5 598.8) scale(0.82 1)" text-anchor="middle" font-size="8.6" fill="#e2e2e2">1</text>
<text transform="translate(87.8 598.8) scale(0.82 1)" text-anchor="middle" font-size="8.6" fill="#e2e2e2">67585</text>
<text transform="translate(123.1 598.8) scale(0.82 1)" text-anchor="middle" font-size="8.6" fill="#e2e2e2">135169</text>
<text transform="translate(158.4 598.8) scale(0.82 1)" text-anchor="middle" font-size="8.6" fill="#e2e2e2">202753</text>
<text transform="translate(193.7 598.8) scale(0.82 1)" text-anchor="middle" font-size="8.6" fill="#e2e2e2">270337</text>
<text transform="translate(229 598.8) scale(0.82 1)" text-anchor="middle" font-size="8.6" fill="#e2e2e2">337921</text>
<text transform="translate(264.3 598.8) scale(0.82 1)" text-anchor="middle" font-size="8.6" fill="#e2e2e2">405504</text>
<text transform="translate(299.6 598.8) scale(0.82 1)" text-anchor="middle" font-size="8.6" fill="#e2e2e2">473088</text>
<text transform="translate(334.9 598.8) scale(0.82 1)" text-anchor="middle" font-size="8.6" fill="#e2e2e2">540672</text>
<text transform="translate(370.2 598.8) scale(0.82 1)" text-anchor="middle" font-size="8.6" fill="#e2e2e2">608256</text>
<text transform="translate(405.5 598.8) scale(0.82 1)" text-anchor="middle" font-size="8.6" fill="#e2e2e2">675840</text>
</g>
<text x="209.15" y="611.8" textLength="37.1" lengthAdjust="spacingAndGlyphs" font-size="9.7" fill="#d2d2d2">Sample</text>
<text transform="translate(23.5 493.9) rotate(-90) scale(1 1.13)" textLength="55.0" lengthAdjust="spacingAndGlyphs" font-size="12" fill="#d2d2d2">Level (dB)</text>
<rect x="460" y="62" width="353" height="242" fill="#000"/>
<rect x="496" y="192" width="52" height="112" fill="#8a8aff"/>
<rect x="497" y="193" width="50" height="111" fill="#0000ff"/>
<rect x="553" y="190" width="52" height="114" fill="#8a8aff"/>
<rect x="554" y="191" width="50" height="113" fill="#0000ff"/>
<rect x="611" y="84" width="51" height="220" fill="#8a8aff"/>
<rect x="612" y="85" width="49" height="219" fill="#0000ff"/>
<rect x="668" y="190" width="52" height="114" fill="#8a8aff"/>
<rect x="669" y="191" width="50" height="113" fill="#0000ff"/>
<rect x="725" y="191" width="52" height="113" fill="#8a8aff"/>
<rect x="726" y="192" width="50" height="112" fill="#0000ff"/>
<path d="M461 62.5H813" stroke="#000" stroke-width="1"/>
<path d="M461 62.5H813" stroke="#525252" stroke-width="1" stroke-dasharray="3 3" stroke-dashoffset="1"/>
<path d="M461 79.5H813" stroke="#000" stroke-width="1"/>
<path d="M461 79.5H813" stroke="#525252" stroke-width="1" stroke-dasharray="3 3" stroke-dashoffset="1"/>
<path d="M461 97.5H813" stroke="#000" stroke-width="1"/>
<path d="M461 97.5H813" stroke="#525252" stroke-width="1" stroke-dasharray="3 3" stroke-dashoffset="1"/>
<path d="M461 114.5H813" stroke="#000" stroke-width="1"/>
<path d="M461 114.5H813" stroke="#525252" stroke-width="1" stroke-dasharray="3 3" stroke-dashoffset="1"/>
<path d="M461 131.5H813" stroke="#000" stroke-width="1"/>
<path d="M461 131.5H813" stroke="#525252" stroke-width="1" stroke-dasharray="3 3" stroke-dashoffset="1"/>
<path d="M461 148.5H813" stroke="#000" stroke-width="1"/>
<path d="M461 148.5H813" stroke="#525252" stroke-width="1" stroke-dasharray="3 3" stroke-dashoffset="1"/>
<path d="M461 166.5H813" stroke="#000" stroke-width="1"/>
<path d="M461 166.5H813" stroke="#525252" stroke-width="1" stroke-dasharray="3 3" stroke-dashoffset="1"/>
<path d="M461 183.5H813" stroke="#000" stroke-width="1"/>
<path d="M461 183.5H813" stroke="#525252" stroke-width="1" stroke-dasharray="3 3" stroke-dashoffset="1"/>
<path d="M461 200.5H813" stroke="#000" stroke-width="1"/>
<path d="M461 200.5H813" stroke="#525252" stroke-width="1" stroke-dasharray="3 3" stroke-dashoffset="1"/>
<path d="M461 218.5H813" stroke="#000" stroke-width="1"/>
<path d="M461 218.5H813" stroke="#525252" stroke-width="1" stroke-dasharray="3 3" stroke-dashoffset="1"/>
<path d="M461 235.5H813" stroke="#000" stroke-width="1"/>
<path d="M461 235.5H813" stroke="#525252" stroke-width="1" stroke-dasharray="3 3" stroke-dashoffset="1"/>
<path d="M461 252.5H813" stroke="#000" stroke-width="1"/>
<path d="M461 252.5H813" stroke="#525252" stroke-width="1" stroke-dasharray="3 3" stroke-dashoffset="1"/>
<path d="M461 269.5H813" stroke="#000" stroke-width="1"/>
<path d="M461 269.5H813" stroke="#525252" stroke-width="1" stroke-dasharray="3 3" stroke-dashoffset="1"/>
<path d="M461 287.5H813" stroke="#000" stroke-width="1"/>
<path d="M461 287.5H813" stroke="#525252" stroke-width="1" stroke-dasharray="3 3" stroke-dashoffset="1"/>
<path d="M464.5 62V304" stroke="#000" stroke-width="1"/>
<path d="M464.5 62V304" stroke="#525252" stroke-width="1" stroke-dasharray="3 3" stroke-dashoffset="0"/>
<path d="M499.5 62V304" stroke="#000" stroke-width="1"/>
<path d="M499.5 62V304" stroke="#525252" stroke-width="1" stroke-dasharray="3 3" stroke-dashoffset="0"/>
<path d="M533.5 62V304" stroke="#000" stroke-width="1"/>
<path d="M533.5 62V304" stroke="#525252" stroke-width="1" stroke-dasharray="3 3" stroke-dashoffset="0"/>
<path d="M568.5 62V304" stroke="#000" stroke-width="1"/>
<path d="M568.5 62V304" stroke="#525252" stroke-width="1" stroke-dasharray="3 3" stroke-dashoffset="0"/>
<path d="M602.5 62V304" stroke="#000" stroke-width="1"/>
<path d="M602.5 62V304" stroke="#525252" stroke-width="1" stroke-dasharray="3 3" stroke-dashoffset="0"/>
<path d="M637.5 62V304" stroke="#000" stroke-width="1"/>
<path d="M637.5 62V304" stroke="#525252" stroke-width="1" stroke-dasharray="3 3" stroke-dashoffset="0"/>
<path d="M671.5 62V304" stroke="#000" stroke-width="1"/>
<path d="M671.5 62V304" stroke="#525252" stroke-width="1" stroke-dasharray="3 3" stroke-dashoffset="0"/>
<path d="M706.5 62V304" stroke="#000" stroke-width="1"/>
<path d="M706.5 62V304" stroke="#525252" stroke-width="1" stroke-dasharray="3 3" stroke-dashoffset="0"/>
<path d="M740.5 62V304" stroke="#000" stroke-width="1"/>
<path d="M740.5 62V304" stroke="#525252" stroke-width="1" stroke-dasharray="3 3" stroke-dashoffset="0"/>
<path d="M775.5 62V304" stroke="#000" stroke-width="1"/>
<path d="M775.5 62V304" stroke="#525252" stroke-width="1" stroke-dasharray="3 3" stroke-dashoffset="0"/>
<path d="M809.5 62V304" stroke="#000" stroke-width="1"/>
<path d="M809.5 62V304" stroke="#525252" stroke-width="1" stroke-dasharray="3 3" stroke-dashoffset="0"/>
<path d="M460.5 235V261M461.5 235V260M462.5 249V259M463.5 248V258M464.5 251V261M465.5 251V258M466.5 251V261M467.5 251V260M468.5 251V258M469.5 252V258M470.5 250V260M471.5 250V260M472.5 250V258M473.5 251V258M474.5 251V259M475.5 251V260M476.5 251V258M477.5 250V259M478.5 252V259M479.5 250V259M480.5 248V258M481.5 250V260M482.5 248V259M483.5 252V259M484.5 251V259M485.5 250V260M486.5 250V260M487.5 252V260M488.5 251V260M489.5 251V259M490.5 252V260M491.5 250V259M492.5 251V259M493.5 251V261M494.5 251V260M495.5 251V261M496.5 250V261M497.5 252V259M498.5 251V262M499.5 252V260M500.5 252V261M501.5 250V259M502.5 252V260M503.5 251V260M504.5 252V259M505.5 252V261M506.5 252V260M507.5 252V262M508.5 252V259M509.5 250V261M510.5 250V260M511.5 251V259M512.5 252V259M513.5 251V260M514.5 252V260M515.5 251V261M516.5 251V261M517.5 251V260M518.5 249V260M519.5 251V259M520.5 251V259M521.5 252V260M522.5 250V262M523.5 252V259M524.5 252V259M525.5 251V259M526.5 252V260M527.5 250V261M528.5 249V260M529.5 251V261M530.5 252V260M531.5 252V260M532.5 251V259M533.5 250V259M534.5 252V260M535.5 251V262M536.5 251V260M537.5 251V261M538.5 250V259M539.5 251V259M540.5 251V260M541.5 250V261M542.5 252V260M543.5 251V261M544.5 251V261M545.5 252V260M546.5 252V259M547.5 251V261M548.5 251V261M549.5 250V260M550.5 243V259M551.5 252V259M552.5 251V260M553.5 252V259M554.5 251V259M555.5 252V260M556.5 252V259M557.5 252V259M558.5 251V259M559.5 251V259M560.5 250V261M561.5 251V259M562.5 252V259M563.5 251V260M564.5 252V260M565.5 250V260M566.5 251V260M567.5 251V260M568.5 252V259M569.5 251V259M570.5 251V258M571.5 252V259M572.5 247V258M573.5 249V258M574.5 250V258M575.5 251V258M576.5 251V259M577.5 251V259M578.5 250V258M579.5 250V258M580.5 251V258M581.5 251V259M582.5 251V259M583.5 250V260M584.5 251V258M585.5 249V259M586.5 250V258M587.5 247V258M588.5 250V257M589.5 249V259M590.5 250V257M591.5 250V259M592.5 248V257M593.5 248V258M594.5 248V261M595.5 248V257M596.5 248V262M597.5 249V256M598.5 248V256M599.5 248V255M600.5 248V257M601.5 247V255M602.5 246V257M603.5 246V255M604.5 246V254M605.5 247V253M606.5 246V254M607.5 246V254M608.5 242V257M609.5 218V252M610.5 169V221M611.5 144V173M612.5 144V153M613.5 144V153M614.5 145V154M615.5 145V153M616.5 145V153M617.5 145V152M618.5 145V153M619.5 145V153M620.5 145V153M621.5 145V153M622.5 144V152M623.5 145V152M624.5 145V153M625.5 143V152M626.5 145V153M627.5 143V152M628.5 145V154M629.5 145V153M630.5 145V152M631.5 145V152M632.5 144V152M633.5 145V154M634.5 145V152M635.5 144V153M636.5 144V169M637.5 145V169M638.5 145V152M639.5 145V153M640.5 143V153M641.5 143V152M642.5 145V154M643.5 145V153M644.5 145V154M645.5 144V154M646.5 144V153M647.5 145V153M648.5 145V153M649.5 145V153M650.5 145V154M651.5 144V153M652.5 145V153M653.5 144V153M654.5 145V152M655.5 145V153M656.5 145V152M657.5 145V153M658.5 145V153M659.5 145V152M660.5 145V153M661.5 144V153M662.5 144V159M663.5 155V186M664.5 183V221M665.5 218V249M666.5 242V257M667.5 245V256M668.5 246V256M669.5 247V254M670.5 245V256M671.5 245V254M672.5 248V255M673.5 246V256M674.5 247V258M675.5 247V256M676.5 246V256M677.5 249V258M678.5 249V257M679.5 249V257M680.5 248V260M681.5 250V257M682.5 250V259M683.5 249V258M684.5 250V257M685.5 249V258M686.5 250V258M687.5 249V257M688.5 250V259M689.5 250V257M690.5 249V257M691.5 250V259M692.5 251V259M693.5 250V259M694.5 251V260M695.5 251V258M696.5 243V259M697.5 251V258M698.5 249V260M699.5 251V261M700.5 252V259M701.5 250V258M702.5 248V258M703.5 250V260M704.5 251V259M705.5 248V260M706.5 251V259M707.5 251V261M708.5 252V260M709.5 251V259M710.5 251V259M711.5 250V259M712.5 252V260M713.5 251V259M714.5 250V260M715.5 250V261M716.5 252V259M717.5 251V260M718.5 252V259M719.5 251V260M720.5 251V260M721.5 251V259M722.5 251V259M723.5 252V260M724.5 251V259M725.5 252V260M726.5 252V259M727.5 252V259M728.5 250V259M729.5 252V259M730.5 251V261M731.5 250V259M732.5 252V262M733.5 252V260M734.5 251V260M735.5 250V263M736.5 252V260M737.5 252V262M738.5 252V261M739.5 251V261M740.5 251V261M741.5 252V259M742.5 252V260M743.5 250V260M744.5 252V259M745.5 251V260M746.5 252V261M747.5 252V263M748.5 252V259M749.5 251V260M750.5 252V262M751.5 252V261M752.5 251V260M753.5 252V260M754.5 248V260M755.5 252V260M756.5 252V261M757.5 252V261M758.5 252V259M759.5 251V261M760.5 251V259M761.5 252V260M762.5 251V259M763.5 251V261M764.5 249V261M765.5 252V261M766.5 252V262M767.5 251V260M768.5 252V259M769.5 251V260M770.5 252V259M771.5 251V259M772.5 251V262M773.5 251V262M774.5 251V259M775.5 251V261M776.5 252V260M777.5 250V260M778.5 251V259M779.5 252V259M780.5 250V261M781.5 251V259M782.5 251V261M783.5 250V259M784.5 252V260M785.5 251V261M786.5 252V259M787.5 250V259M788.5 252V259M789.5 250V260M790.5 251V259M791.5 251V259M792.5 252V258M793.5 250V262M794.5 251V260M795.5 251V259M796.5 250V260M797.5 252V258M798.5 251V259M799.5 251V260M800.5 252V261M801.5 251V260M802.5 250V260M803.5 251V261M804.5 251V258M805.5 251V259M806.5 252V258M807.5 250V259M808.5 250V259M809.5 251V260M810.5 250V260M811.5 251V261M812.5 237V258M813.5 235V263" stroke="#00ff00" stroke-width="1" fill="none"/>
<rect x="470" y="66" width="123.8" height="15" fill="#000"/>
<text x="471.0" y="78" font-size="10.58" textLength="121.8" lengthAdjust="spacingAndGlyphs" fill="#ffffff" stroke="#ffffff" stroke-width="0.2">Sample Rate: 61.44 Msps</text>
<rect x="470" y="81" width="125.6" height="15" fill="#000"/>
<text x="471.0" y="93" font-size="10.58" textLength="123.6" lengthAdjust="spacingAndGlyphs" fill="#ffffff" stroke="#ffffff" stroke-width="0.2">Resolution BW: 1.875 kHz</text>
<rect x="470" y="96" width="112.8" height="15" fill="#000"/>
<text x="471.0" y="108" font-size="10.58" textLength="110.8" lengthAdjust="spacingAndGlyphs" fill="#ffffff" stroke="#ffffff" stroke-width="0.2">Total Power: -12.98 dB</text>
<rect x="699.2" y="66" width="106.4" height="15" fill="#000"/>
<text x="700.2" y="78" font-size="10.58" textLength="104.4" lengthAdjust="spacingAndGlyphs" fill="#08e8ee" stroke="#08e8ee" stroke-width="0.2">FFT Time: 10.6667 ms</text>
<rect x="683.3" y="81" width="122.3" height="15" fill="#000"/>
<text x="684.3" y="93" font-size="10.58" textLength="120.3" lengthAdjust="spacingAndGlyphs" fill="#08e8ee" stroke="#08e8ee" stroke-width="0.2">Carrier Power: -12.99 dB</text>
<rect x="680.1" y="96" width="125.5" height="15" fill="#000"/>
<text x="681.1" y="108" font-size="10.58" textLength="123.5" lengthAdjust="spacingAndGlyphs" fill="#08e8ee" stroke="#08e8ee" stroke-width="0.2">ACLR lower1: -60.96 dBc</text>
<rect x="680.1" y="111" width="125.5" height="15" fill="#000"/>
<text x="681.1" y="123" font-size="10.58" textLength="123.5" lengthAdjust="spacingAndGlyphs" fill="#08e8ee" stroke="#08e8ee" stroke-width="0.2">ACLR upper1: -61.08 dBc</text>
<rect x="680.1" y="126" width="125.5" height="15" fill="#000"/>
<text x="681.1" y="138" font-size="10.58" textLength="123.5" lengthAdjust="spacingAndGlyphs" fill="#08e8ee" stroke="#08e8ee" stroke-width="0.2">ACLR lower2: -62.05 dBc</text>
<rect x="680.1" y="141" width="125.5" height="15" fill="#000"/>
<text x="681.1" y="153" font-size="10.58" textLength="123.5" lengthAdjust="spacingAndGlyphs" fill="#08e8ee" stroke="#08e8ee" stroke-width="0.2">ACLR upper2: -61.88 dBc</text>
<rect x="460" y="62" width="1" height="243" fill="#b4b4b4"/>
<rect x="460" y="304" width="353" height="1" fill="#b4b4b4"/>
<text transform="translate(457 63.7) scale(0.82 1)" text-anchor="end" font-size="8.6" fill="#e2e2e2">0</text>
<text transform="translate(457 80.99) scale(0.82 1)" text-anchor="end" font-size="8.6" fill="#e2e2e2">-10</text>
<text transform="translate(457 98.27) scale(0.82 1)" text-anchor="end" font-size="8.6" fill="#e2e2e2">-20</text>
<text transform="translate(457 115.56) scale(0.82 1)" text-anchor="end" font-size="8.6" fill="#e2e2e2">-30</text>
<text transform="translate(457 132.84) scale(0.82 1)" text-anchor="end" font-size="8.6" fill="#e2e2e2">-40</text>
<text transform="translate(457 150.13) scale(0.82 1)" text-anchor="end" font-size="8.6" fill="#e2e2e2">-50</text>
<text transform="translate(457 167.41) scale(0.82 1)" text-anchor="end" font-size="8.6" fill="#e2e2e2">-60</text>
<text transform="translate(457 184.7) scale(0.82 1)" text-anchor="end" font-size="8.6" fill="#e2e2e2">-70</text>
<text transform="translate(457 201.99) scale(0.82 1)" text-anchor="end" font-size="8.6" fill="#e2e2e2">-80</text>
<text transform="translate(457 219.27) scale(0.82 1)" text-anchor="end" font-size="8.6" fill="#e2e2e2">-90</text>
<text transform="translate(457 236.56) scale(0.82 1)" text-anchor="end" font-size="8.6" fill="#e2e2e2">-100</text>
<text transform="translate(457 253.84) scale(0.82 1)" text-anchor="end" font-size="8.6" fill="#e2e2e2">-110</text>
<text transform="translate(457 271.13) scale(0.82 1)" text-anchor="end" font-size="8.6" fill="#e2e2e2">-120</text>
<text transform="translate(457 288.41) scale(0.82 1)" text-anchor="end" font-size="8.6" fill="#e2e2e2">-130</text>
<text transform="translate(457 305.7) scale(0.82 1)" text-anchor="end" font-size="8.6" fill="#e2e2e2">-140</text>
<text transform="translate(464.5 314.8) scale(0.82 1)" text-anchor="middle" font-size="8.6" fill="#e2e2e2">-30</text>
<text transform="translate(499 314.8) scale(0.82 1)" text-anchor="middle" font-size="8.6" fill="#e2e2e2">-24</text>
<text transform="translate(533.5 314.8) scale(0.82 1)" text-anchor="middle" font-size="8.6" fill="#e2e2e2">-18</text>
<text transform="translate(568 314.8) scale(0.82 1)" text-anchor="middle" font-size="8.6" fill="#e2e2e2">-12</text>
<text transform="translate(602.5 314.8) scale(0.82 1)" text-anchor="middle" font-size="8.6" fill="#e2e2e2">-6</text>
<text transform="translate(637 314.8) scale(0.82 1)" text-anchor="middle" font-size="8.6" fill="#e2e2e2">0</text>
<text transform="translate(671.5 314.8) scale(0.82 1)" text-anchor="middle" font-size="8.6" fill="#e2e2e2">6</text>
<text transform="translate(706 314.8) scale(0.82 1)" text-anchor="middle" font-size="8.6" fill="#e2e2e2">12</text>
<text transform="translate(740.5 314.8) scale(0.82 1)" text-anchor="middle" font-size="8.6" fill="#e2e2e2">18</text>
<text transform="translate(775 314.8) scale(0.82 1)" text-anchor="middle" font-size="8.6" fill="#e2e2e2">24</text>
<text transform="translate(809.5 314.8) scale(0.82 1)" text-anchor="middle" font-size="8.6" fill="#e2e2e2">30</text>
<text x="596.55" y="327.8" textLength="78.3" lengthAdjust="spacingAndGlyphs" font-size="9.7" fill="#d2d2d2">Frequency (MHz)</text>
<text transform="translate(431.5 227.4) rotate(-90) scale(1 1.13)" textLength="70.2" lengthAdjust="spacingAndGlyphs" font-size="12" fill="#d2d2d2">Level (dBFS)</text>
<rect x="460" y="346" width="354" height="242" fill="#000"/>
<path d="M461 346.5H814" stroke="#000" stroke-width="1"/>
<path d="M461 346.5H814" stroke="#525252" stroke-width="1" stroke-dasharray="3 3" stroke-dashoffset="1"/>
<path d="M461 381.5H814" stroke="#000" stroke-width="1"/>
<path d="M461 381.5H814" stroke="#525252" stroke-width="1" stroke-dasharray="3 3" stroke-dashoffset="1"/>
<path d="M461 415.5H814" stroke="#000" stroke-width="1"/>
<path d="M461 415.5H814" stroke="#525252" stroke-width="1" stroke-dasharray="3 3" stroke-dashoffset="1"/>
<path d="M461 450.5H814" stroke="#000" stroke-width="1"/>
<path d="M461 450.5H814" stroke="#525252" stroke-width="1" stroke-dasharray="3 3" stroke-dashoffset="1"/>
<path d="M461 484.5H814" stroke="#000" stroke-width="1"/>
<path d="M461 484.5H814" stroke="#525252" stroke-width="1" stroke-dasharray="3 3" stroke-dashoffset="1"/>
<path d="M461 519.5H814" stroke="#000" stroke-width="1"/>
<path d="M461 519.5H814" stroke="#525252" stroke-width="1" stroke-dasharray="3 3" stroke-dashoffset="1"/>
<path d="M461 553.5H814" stroke="#000" stroke-width="1"/>
<path d="M461 553.5H814" stroke="#525252" stroke-width="1" stroke-dasharray="3 3" stroke-dashoffset="1"/>
<path d="M484.5 346V588" stroke="#000" stroke-width="1"/>
<path d="M484.5 346V588" stroke="#525252" stroke-width="1" stroke-dasharray="3 3" stroke-dashoffset="0"/>
<path d="M507.5 346V588" stroke="#000" stroke-width="1"/>
<path d="M507.5 346V588" stroke="#525252" stroke-width="1" stroke-dasharray="3 3" stroke-dashoffset="0"/>
<path d="M531.5 346V588" stroke="#000" stroke-width="1"/>
<path d="M531.5 346V588" stroke="#525252" stroke-width="1" stroke-dasharray="3 3" stroke-dashoffset="0"/>
<path d="M554.5 346V588" stroke="#000" stroke-width="1"/>
<path d="M554.5 346V588" stroke="#525252" stroke-width="1" stroke-dasharray="3 3" stroke-dashoffset="0"/>
<path d="M578.5 346V588" stroke="#000" stroke-width="1"/>
<path d="M578.5 346V588" stroke="#525252" stroke-width="1" stroke-dasharray="3 3" stroke-dashoffset="0"/>
<path d="M601.5 346V588" stroke="#000" stroke-width="1"/>
<path d="M601.5 346V588" stroke="#525252" stroke-width="1" stroke-dasharray="3 3" stroke-dashoffset="0"/>
<path d="M625.5 346V588" stroke="#000" stroke-width="1"/>
<path d="M625.5 346V588" stroke="#525252" stroke-width="1" stroke-dasharray="3 3" stroke-dashoffset="0"/>
<path d="M648.5 346V588" stroke="#000" stroke-width="1"/>
<path d="M648.5 346V588" stroke="#525252" stroke-width="1" stroke-dasharray="3 3" stroke-dashoffset="0"/>
<path d="M672.5 346V588" stroke="#000" stroke-width="1"/>
<path d="M672.5 346V588" stroke="#525252" stroke-width="1" stroke-dasharray="3 3" stroke-dashoffset="0"/>
<path d="M695.5 346V588" stroke="#000" stroke-width="1"/>
<path d="M695.5 346V588" stroke="#525252" stroke-width="1" stroke-dasharray="3 3" stroke-dashoffset="0"/>
<path d="M719.5 346V588" stroke="#000" stroke-width="1"/>
<path d="M719.5 346V588" stroke="#525252" stroke-width="1" stroke-dasharray="3 3" stroke-dashoffset="0"/>
<path d="M742.5 346V588" stroke="#000" stroke-width="1"/>
<path d="M742.5 346V588" stroke="#525252" stroke-width="1" stroke-dasharray="3 3" stroke-dashoffset="0"/>
<path d="M766.5 346V588" stroke="#000" stroke-width="1"/>
<path d="M766.5 346V588" stroke="#525252" stroke-width="1" stroke-dasharray="3 3" stroke-dashoffset="0"/>
<path d="M789.5 346V588" stroke="#000" stroke-width="1"/>
<path d="M789.5 346V588" stroke="#525252" stroke-width="1" stroke-dasharray="3 3" stroke-dashoffset="0"/>
<path d="M813.5 346V588" stroke="#000" stroke-width="1"/>
<path d="M813.5 346V588" stroke="#525252" stroke-width="1" stroke-dasharray="3 3" stroke-dashoffset="0"/>
<path d="M460.5 361.01 L462.85 361.36 L465.21 361.72 L467.56 362.09 L469.91 362.46 L472.27 362.85 L474.62 363.24 L476.97 363.64 L479.33 364.05 L481.68 364.47 L484.03 364.9 L486.39 365.34 L488.74 365.79 L491.09 366.25 L493.45 366.73 L495.8 367.21 L498.15 367.7 L500.51 368.21 L502.86 368.72 L505.21 369.25 L507.57 369.8 L509.92 370.35 L512.27 370.92 L514.63 371.5 L516.98 372.09 L519.33 372.7 L521.69 373.32 L524.04 373.96 L526.39 374.61 L528.75 375.28 L531.1 375.96 L533.45 376.66 L535.81 377.37 L538.16 378.1 L540.51 378.85 L542.87 379.61 L545.22 380.4 L547.57 381.2 L549.93 382.02 L552.28 382.86 L554.63 383.71 L556.99 384.59 L559.34 385.49 L561.69 386.41 L564.05 387.35 L566.4 388.32 L568.75 389.3 L571.11 390.31 L573.46 391.34 L575.81 392.4 L578.17 393.48 L580.52 394.58 L582.87 395.72 L585.23 396.87 L587.58 398.06 L589.93 399.27 L592.29 400.51 L594.64 401.78 L596.99 403.08 L599.35 404.41 L601.7 405.77 L604.05 407.16 L606.41 408.59 L608.76 410.05 L611.11 411.54 L613.47 413.07 L615.82 414.63 L618.17 416.23 L620.53 417.86 L622.88 419.54 L625.23 421.25 L627.59 423 L629.94 424.8 L632.29 426.63 L634.65 428.51 L637 430.43 L639.35 432.4 L641.71 434.41 L644.06 436.47 L646.41 438.58 L648.77 440.73 L651.12 442.94 L653.47 445.2 L655.83 447.51 L658.18 449.87 L660.53 452.29 L662.89 454.77 L665.24 457.3 L667.59 459.89 L669.95 462.55 L672.3 465.26 L674.65 468.04 L677.01 470.88 L679.36 473.79 L681.71 476.77 L684.07 479.81 L686.42 482.93 L688.77 486.12 L691.13 489.38 L693.48 492.72 L695.83 496.14 L698.19 499.64 L700.54 503.22 L702.89 506.88 L705.25 510.63 L707.6 514.46 L709.95 518.39 L712.31 522.4 L714.66 526.51 L717.01 530.71 L719.37 535.02 L721.72 539.42 L724.07 543.93 L726.43 548.54 L728.78 553.25 L731.13 558.08 L733.49 563.02 L735.84 568.08 L738.19 573.25 L740.55 578.54 L742.9 583.96 L744.55 588" stroke="#8a8a8a" stroke-width="0.8" fill="none" shape-rendering="auto"/>
<path d="M460.5 361.01 L462.85 361.36 L465.21 361.72 L467.56 362.09 L469.91 362.46 L472.27 362.85 L474.62 363.24 L476.97 363.64 L479.33 364.05 L481.68 364.47 L484.03 364.9 L486.39 365.34 L488.74 365.79 L491.09 366.25 L493.45 366.73 L495.8 367.21 L498.15 367.7 L500.51 368.21 L502.86 368.72 L505.21 369.25 L507.57 369.8 L509.92 370.35 L512.27 370.92 L514.63 371.5 L516.98 372.09 L519.33 372.7 L521.69 373.32 L524.04 373.96 L526.39 374.61 L528.75 375.28 L531.1 375.96 L533.45 376.66 L535.81 377.37 L538.16 378.1 L540.51 378.85 L542.87 379.61 L545.22 380.4 L547.57 381.2 L549.93 382.02 L552.28 382.86 L554.63 383.71 L556.99 384.59 L559.34 385.49 L561.69 386.41 L564.05 387.35 L566.4 388.32 L568.75 389.3 L571.11 390.31 L573.46 391.34 L575.81 392.4 L578.17 393.48 L580.52 394.58 L582.87 395.72 L585.23 396.87 L587.58 398.06 L589.93 399.27 L592.29 400.51 L594.64 401.78 L596.99 403.08 L599.35 404.41 L601.7 405.77 L604.05 407.16 L606.41 408.59 L608.76 410.05 L611.11 411.54 L613.47 413.07 L615.82 414.63 L618.17 416.23 L620.53 417.86 L622.88 419.54 L625.23 421.25 L627.59 423 L629.94 424.8 L632.29 426.63 L634.65 428.51 L637 430.43 L639.35 432.4 L641.71 434.41 L644.06 436.47 L646.41 438.58 L648.77 440.73 L658.42 449.71 L667.59 460.12 L677.01 469.94 L690.42 484.29 L700.54 499.21 L711.13 518.86 L713.01 523.38 L717.25 523.38 L720.07 547.54 L728.07 547.54 L728.54 588" stroke="#00e800" stroke-width="0.9" fill="none" shape-rendering="auto"/>
<rect x="470" y="350" width="84.5" height="15" fill="#000"/>
<text x="471.0" y="362" font-size="10.58" textLength="82.5" lengthAdjust="spacingAndGlyphs" fill="#ffffff" stroke="#ffffff" stroke-width="0.2">Samples: 675840</text>
<rect x="681.7" y="350" width="123.9" height="15" fill="#000"/>
<text x="682.7" y="362" font-size="10.58" textLength="121.9" lengthAdjust="spacingAndGlyphs" fill="#08e8ee" stroke="#08e8ee" stroke-width="0.2">RMS Power: -12.98 dBFS</text>
<rect x="686.8" y="365" width="118.8" height="15" fill="#000"/>
<text x="687.8" y="377" font-size="10.58" textLength="116.8" lengthAdjust="spacingAndGlyphs" fill="#08e8ee" stroke="#08e8ee" stroke-width="0.2">Peak Power: -1.62 dBFS</text>
<rect x="695.7" y="380" width="109.9" height="15" fill="#000"/>
<text x="696.7" y="392" font-size="10.58" textLength="107.9" lengthAdjust="spacingAndGlyphs" fill="#08e8ee" stroke="#08e8ee" stroke-width="0.2">Crest Factor: 11.37 dB</text>
<rect x="716.5" y="395" width="89.1" height="15" fill="#000"/>
<text x="717.5" y="407" font-size="10.58" textLength="87.1" lengthAdjust="spacingAndGlyphs" fill="#08e8ee" stroke="#08e8ee" stroke-width="0.2">Average: 36.79 %</text>
<rect x="707.5" y="410" width="98.1" height="15" fill="#000"/>
<text x="708.5" y="422" font-size="10.58" textLength="96.1" lengthAdjust="spacingAndGlyphs" fill="#08e8ee" stroke="#08e8ee" stroke-width="0.2">PAR (10%): 3.62 dB</text>
<rect x="713.9" y="425" width="91.7" height="15" fill="#000"/>
<text x="714.9" y="437" font-size="10.58" textLength="89.7" lengthAdjust="spacingAndGlyphs" fill="#08e8ee" stroke="#08e8ee" stroke-width="0.2">PAR (1%): 6.61 dB</text>
<rect x="698.6" y="440" width="107" height="15" fill="#000"/>
<text x="699.6" y="452" font-size="10.58" textLength="105.0" lengthAdjust="spacingAndGlyphs" fill="#08e8ee" stroke="#08e8ee" stroke-width="0.2">PAR (0.10%): 8.41 dB</text>
<rect x="698.6" y="455" width="107" height="15" fill="#000"/>
<text x="699.6" y="467" font-size="10.58" textLength="105.0" lengthAdjust="spacingAndGlyphs" fill="#08e8ee" stroke="#08e8ee" stroke-width="0.2">PAR (0.01%): 9.77 dB</text>
<rect x="686.6" y="470" width="119" height="15" fill="#000"/>
<text x="687.6" y="482" font-size="10.58" textLength="117.0" lengthAdjust="spacingAndGlyphs" fill="#08e8ee" stroke="#08e8ee" stroke-width="0.2">PAR (0.001%): 10.65 dB</text>
<rect x="680.7" y="485" width="124.9" height="15" fill="#000"/>
<text x="681.7" y="497" font-size="10.58" textLength="122.9" lengthAdjust="spacingAndGlyphs" fill="#08e8ee" stroke="#08e8ee" stroke-width="0.2">PAR (0.0001%): 10.97 dB</text>
<rect x="460" y="346" width="1" height="243" fill="#b4b4b4"/>
<rect x="460" y="588" width="354" height="1" fill="#b4b4b4"/>
<text transform="translate(457 347.7) scale(0.82 1)" text-anchor="end" font-size="8.6" fill="#e2e2e2">100</text>
<text transform="translate(457 382.27) scale(0.82 1)" text-anchor="end" font-size="8.6" fill="#e2e2e2">10</text>
<text transform="translate(457 416.84) scale(0.82 1)" text-anchor="end" font-size="8.6" fill="#e2e2e2">1</text>
<text transform="translate(457 451.41) scale(0.82 1)" text-anchor="end" font-size="8.6" fill="#e2e2e2">0.1</text>
<text transform="translate(457 485.99) scale(0.82 1)" text-anchor="end" font-size="8.6" fill="#e2e2e2">0.01</text>
<text transform="translate(457 520.56) scale(0.82 1)" text-anchor="end" font-size="8.6" fill="#e2e2e2">0.001</text>
<text transform="translate(457 555.13) scale(0.82 1)" text-anchor="end" font-size="8.6" fill="#e2e2e2">0.0001</text>
<text transform="translate(457 589.7) scale(0.82 1)" text-anchor="end" font-size="8.6" fill="#e2e2e2">0.00001</text>
<text transform="translate(460.5 598.8) scale(0.82 1)" text-anchor="middle" font-size="8.6" fill="#e2e2e2">0</text>
<text transform="translate(484.03 598.8) scale(0.82 1)" text-anchor="middle" font-size="8.6" fill="#e2e2e2">1</text>
<text transform="translate(507.57 598.8) scale(0.82 1)" text-anchor="middle" font-size="8.6" fill="#e2e2e2">2</text>
<text transform="translate(531.1 598.8) scale(0.82 1)" text-anchor="middle" font-size="8.6" fill="#e2e2e2">3</text>
<text transform="translate(554.63 598.8) scale(0.82 1)" text-anchor="middle" font-size="8.6" fill="#e2e2e2">4</text>
<text transform="translate(578.17 598.8) scale(0.82 1)" text-anchor="middle" font-size="8.6" fill="#e2e2e2">5</text>
<text transform="translate(601.7 598.8) scale(0.82 1)" text-anchor="middle" font-size="8.6" fill="#e2e2e2">6</text>
<text transform="translate(625.23 598.8) scale(0.82 1)" text-anchor="middle" font-size="8.6" fill="#e2e2e2">7</text>
<text transform="translate(648.77 598.8) scale(0.82 1)" text-anchor="middle" font-size="8.6" fill="#e2e2e2">8</text>
<text transform="translate(672.3 598.8) scale(0.82 1)" text-anchor="middle" font-size="8.6" fill="#e2e2e2">9</text>
<text transform="translate(695.83 598.8) scale(0.82 1)" text-anchor="middle" font-size="8.6" fill="#e2e2e2">10</text>
<text transform="translate(719.37 598.8) scale(0.82 1)" text-anchor="middle" font-size="8.6" fill="#e2e2e2">11</text>
<text transform="translate(742.9 598.8) scale(0.82 1)" text-anchor="middle" font-size="8.6" fill="#e2e2e2">12</text>
<text transform="translate(766.43 598.8) scale(0.82 1)" text-anchor="middle" font-size="8.6" fill="#e2e2e2">13</text>
<text transform="translate(789.97 598.8) scale(0.82 1)" text-anchor="middle" font-size="8.6" fill="#e2e2e2">14</text>
<text transform="translate(813.5 598.8) scale(0.82 1)" text-anchor="middle" font-size="8.6" fill="#e2e2e2">15</text>
<text x="572" y="611.8" textLength="127.4" lengthAdjust="spacingAndGlyphs" font-size="9.7" fill="#d2d2d2">Peak to Average Ratio (dB)</text>
<text transform="translate(431.5 503.05) rotate(-90) scale(1 1.13)" textLength="78.1" lengthAdjust="spacingAndGlyphs" font-size="12" fill="#d2d2d2">Probability (%)</text>
<text transform="translate(820 615) scale(0.82 1)" text-anchor="end" font-size="9.3" fill="#f418f4">FFT: 0.047 VDT: 0.033</text>
</svg>
</body>
</html>
